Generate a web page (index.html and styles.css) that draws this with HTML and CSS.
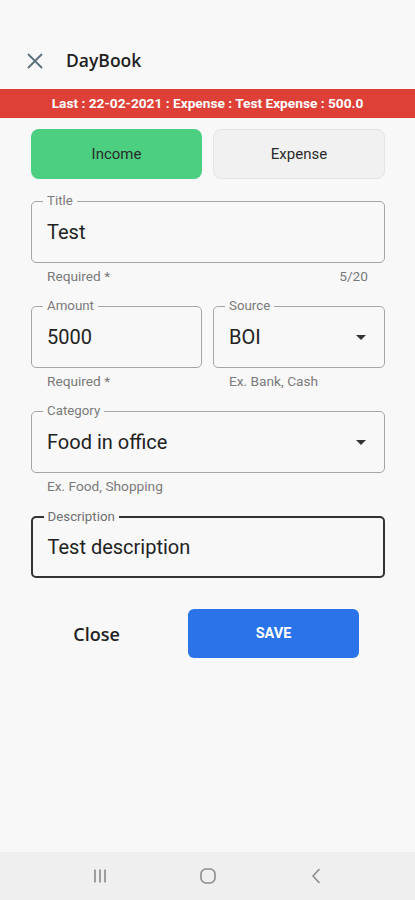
FILE: index.html
```html
<!DOCTYPE html>
<html>
<head>
<meta charset="utf-8">
<link rel="stylesheet" href="styles.css">
</head>
<body>
<div class="screen">
  <header class="appbar">
    <svg class="close-icon" width="16" height="16" viewBox="0 0 16 16"><path d="M1.5 1.5 L14.5 14.5 M14.5 1.5 L1.5 14.5" stroke="#5b6f7a" stroke-width="1.8" stroke-linecap="round" fill="none"/></svg>
    <span class="apptitle">DayBook</span>
  </header>
  <div class="banner">Last : 22-02-2021 : Expense : Test Expense : 500.0</div>

  <main class="form">
    <div class="toggle">
      <div class="tbtn income">Income</div>
      <div class="tbtn expense">Expense</div>
    </div>

    <div class="group">
      <div class="field"><span class="label">Title</span><span class="value">Test</span></div>
      <div class="helper"><span>Required *</span><span>5/20</span></div>
    </div>

    <div class="row">
      <div class="group">
        <div class="field"><span class="label">Amount</span><span class="value">5000</span></div>
        <div class="helper"><span>Required *</span></div>
      </div>
      <div class="group">
        <div class="field"><span class="label">Source</span><span class="value">BOI</span><span class="caret"></span></div>
        <div class="helper"><span>Ex. Bank, Cash</span></div>
      </div>
    </div>

    <div class="group">
      <div class="field"><span class="label">Category</span><span class="value">Food in office</span><span class="caret"></span></div>
      <div class="helper"><span>Ex. Food, Shopping</span></div>
    </div>

    <div class="group">
      <div class="field focused"><span class="label">Description</span><span class="value">Test description</span></div>
    </div>

    <div class="actions">
      <div class="btn-close">Close</div>
      <div class="btn-save">SAVE</div>
    </div>
  </main>

  <nav class="navbar">
    <svg width="20" height="20" viewBox="0 0 20 20"><path d="M5 3.5 V16.5 M10 3.5 V16.5 M15 3.5 V16.5" stroke="#8a8a8a" stroke-width="1.6" fill="none"/></svg>
    <svg width="20" height="20" viewBox="0 0 20 20"><rect x="3" y="3" width="14" height="14" rx="5" stroke="#8a8a8a" stroke-width="1.6" fill="none"/></svg>
    <svg width="20" height="20" viewBox="0 0 20 20"><path d="M13 3.5 L7 10 L13 16.5" stroke="#8a8a8a" stroke-width="1.6" fill="none" stroke-linecap="round" stroke-linejoin="round"/></svg>
  </nav>
</div>
</body>
</html>
```

FILE: styles.css
```css
* { box-sizing: border-box; }
html, body { margin: 0; padding: 0; }
body {
  background: #f8f8f8;
  font-family: Roboto, "Liberation Sans", sans-serif;
  color: #222;
}
.screen {
  width: 415px;
  height: 900px;
  display: flex;
  flex-direction: column;
}
.appbar {
  height: 89px;
  padding: 36px 0 0 27px;
  display: flex;
  align-items: flex-start;
  gap: 23px;
}
.close-icon { margin-top: 17px; }
.apptitle {
  font-family: "Open Sans", Roboto, sans-serif;
  font-size: 17.5px;
  font-weight: 600;
  line-height: 20px;
  margin-top: 14px;
  color: #1f1f1f;
}
.banner {
  height: 29px;
  background: #de3f36;
  color: #fff;
  font-weight: 700;
  font-size: 13.7px;
  line-height: 29px;
  text-align: center;
}
.form {
  flex: 1;
  padding: 11px 30px 0 31px;
  display: flex;
  flex-direction: column;
}
.toggle {
  display: grid;
  grid-template-columns: 171px 172px;
  gap: 11px;
  margin-bottom: 22px;
}
.tbtn {
  height: 50px;
  border-radius: 8px;
  display: flex;
  align-items: center;
  justify-content: center;
  font-size: 15px;
  color: #2a2a2a;
}
.income { background: #4ccf80; }
.expense { background: #f1f1f1; border: 1px solid #e4e4e4; }
.group { margin-bottom: 23px; }
.row {
  display: grid;
  grid-template-columns: 171px 172px;
  gap: 11px;
}
.field {
  position: relative;
  height: 62px;
  border: 1.5px solid #a6a6a6;
  border-radius: 5px;
  display: flex;
  align-items: center;
  padding: 0 18px 0 15px;
}
.field.focused { border: 2px solid #333; padding-left: 14.5px; }
.label {
  position: absolute;
  top: -8px;
  left: 11px;
  padding: 0 4px;
  background: #f8f8f8;
  font-size: 13.3px;
  line-height: 14px;
  color: #7a7a7a;
}
.focused .label { left: 10.5px; color: #6f6f6f; }
.value {
  flex: 1;
  font-size: 20px;
  color: #222;
}
.caret {
  width: 0;
  height: 0;
  border-left: 5px solid transparent;
  border-right: 5px solid transparent;
  border-top: 5px solid #333;
}
.helper {
  display: flex;
  justify-content: space-between;
  padding: 0 17px 0 16px;
  margin-top: 6px;
  font-size: 13.7px;
  line-height: 14px;
  color: #7a7a7a;
}
.actions {
  display: flex;
  gap: 6px;
  margin: 8px 0 0 -20px;
}
.btn-close {
  width: 171px;
  height: 49px;
  display: flex;
  align-items: center;
  justify-content: center;
  font-family: "Open Sans", Roboto, sans-serif;
  font-size: 18px;
  font-weight: 600;
  color: #222;
}
.btn-save {
  width: 171px;
  height: 49px;
  border-radius: 6px;
  background: #2a73e9;
  color: #fff;
  font-size: 14.5px;
  font-weight: 700;
  display: flex;
  align-items: center;
  justify-content: center;
}
.navbar {
  height: 48px;
  background: #efefef;
  display: flex;
  align-items: center;
  justify-content: space-between;
  padding: 0 89px 0 90px;
}
```
